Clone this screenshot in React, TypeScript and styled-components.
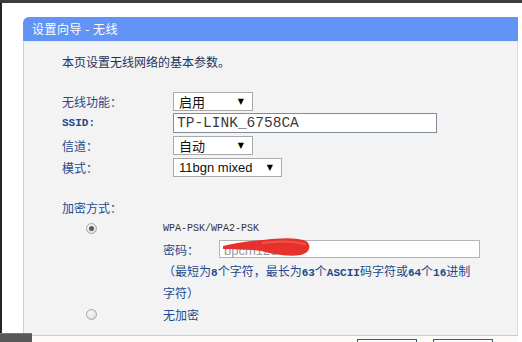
import { FC } from "react";
import styled, { createGlobalStyle } from "styled-components";

const GlobalStyle = createGlobalStyle`
  html, body {
    margin: 0;
    padding: 0;
    background: #fff;
  }
  body {
    font-family: "Noto Sans CJK SC", "Noto Sans", sans-serif;
  }
`;

const cjk = `"Noto Sans CJK SC", "Noto Sans", sans-serif`;
const mono = `"Liberation Mono", "DejaVu Sans Mono", monospace`;

const App: FC = () => {
  return (
    <>
      <GlobalStyle />
      <Screen>
        <TopEdge />
        <Desk>
          <Panel>
            <Header>设置向导 - 无线</Header>
            <Body>
              <Intro>本页设置无线网络的基本参数。</Intro>

              <FormGrid>
                <Label>无线功能：</Label>
                <Select $width={80}>
                  <span>启用</span>
                  <Arrow>▼</Arrow>
                </Select>

                <Label $mono>SSID:</Label>
                <TextInput $width={264}>TP-LINK_6758CA</TextInput>

                <Label>信道：</Label>
                <Select $width={80}>
                  <span>自动</span>
                  <Arrow>▼</Arrow>
                </Select>

                <Label>模式：</Label>
                <Select $width={109} $latin>
                  <span>11bgn mixed</span>
                  <Arrow>▼</Arrow>
                </Select>
              </FormGrid>

              <SectionLabel>加密方式：</SectionLabel>

              <EncGrid>
                <RadioCell $height={18}>
                  <Radio $checked />
                </RadioCell>
                <WpaText>WPA-PSK/WPA2-PSK</WpaText>

                <span />
                <PasswordRow>
                  <PasswordLabel>密码：</PasswordLabel>
                  <PasswordBox>
                    <Hidden>bpcm1234</Hidden>
                    <Scribble viewBox="0 0 92 22" width={92} height={22}>
                      <path
                        d="M2 9 C14 6,28 4,42 3 C58 1,76 0,85 4 C91 8,89 16,80 18 C66 20,52 17,40 14 C28 12,14 13,2 12 Z"
                        fill="#e6312c"
                      />
                      <path
                        d="M42 6 C56 4,72 4,84 7"
                        stroke="#f0544a"
                        strokeWidth={2}
                        fill="none"
                        strokeLinecap="round"
                      />
                    </Scribble>
                  </PasswordBox>
                </PasswordRow>

                <span />
                <Note>
                  （最短为<Ascii>8</Ascii>个字符，最长为<Ascii>63</Ascii>个
                  <Ascii>ASCII</Ascii>码字符或<Ascii>64</Ascii>个
                  <Ascii>16</Ascii>进制
                  <br />
                  字符）
                </Note>

                <RadioCell $height={24}>
                  <Radio />
                </RadioCell>
                <Option>无加密</Option>
              </EncGrid>
            </Body>
            <Footer>
              <Button>上一步</Button>
              <Button>下一步</Button>
            </Footer>
          </Panel>
        </Desk>
        <TaskCorner />
      </Screen>
    </>
  );
};

const Screen = styled.div`
  position: relative;
  width: 522px;
  height: 342px;
  overflow: hidden;
  background: #fff;
  display: flex;
  flex-direction: column;
`;

const TopEdge = styled.div`
  flex-shrink: 0;
  height: 3px;
  background: #3c3c3c;
`;

const Desk = styled.div`
  flex: 1;
  display: flex;
  align-items: flex-start;
  border-left: 2px solid #262626;
  padding: 14px 4px 0 21px;
`;

const Panel = styled.section`
  width: 495px;
  display: flex;
  flex-direction: column;
  flex-shrink: 0;
`;

const Header = styled.div`
  height: 24px;
  line-height: 24px;
  padding-left: 9px;
  background: #6194f5;
  border-top-left-radius: 6px;
  border-bottom: 1px solid #e2eaf6;
  color: #fff;
  font-family: ${cjk};
  font-size: 12px;
  letter-spacing: 0.5px;
`;

const Body = styled.div`
  background: #f3f3f3;
  border-left: 1px solid #f0c796;
  border-right: 1px solid #f4dab5;
  padding: 12px 0 9px 38px;
  color: #23407a;
  font-family: ${cjk};
  font-size: 12px;
`;

const Intro = styled.div`
  line-height: 16px;
  color: #1e335f;
`;

const FormGrid = styled.div`
  margin-top: 20px;
  display: grid;
  grid-template-columns: 111px auto;
  grid-auto-rows: 22px;
  align-items: center;
  justify-items: start;
`;

const Label = styled.span<{ $mono?: boolean }>`
  color: #1f4a8e;
  font-family: ${({ $mono }) => ($mono ? mono : cjk)};
  font-size: ${({ $mono }) => ($mono ? "11px" : "12px")};
  font-weight: ${({ $mono }) => ($mono ? "bold" : "normal")};
`;

const Select = styled.div<{ $width: number; $latin?: boolean }>`
  box-sizing: border-box;
  width: ${({ $width }) => $width}px;
  height: 19px;
  display: flex;
  align-items: center;
  justify-content: space-between;
  padding: 0 8px 0 5px;
  background: #fff;
  border: 1px solid #a9a9a9;
  color: #111;
  font-family: ${({ $latin }) =>
    $latin ? `"Liberation Sans", Arial, sans-serif` : cjk};
  font-size: 13px;
`;

const Arrow = styled.span`
  font-family: "DejaVu Sans", sans-serif;
  font-size: 8px;
  color: #000;
`;

const TextInput = styled.div<{ $width: number }>`
  box-sizing: border-box;
  width: ${({ $width }) => $width}px;
  height: 20px;
  line-height: 18px;
  padding-left: 3px;
  background: #fff;
  border: 1px solid #7d8b9b;
  color: #3a3a3a;
  font-family: ${mono};
  font-size: 14.5px;
`;

const SectionLabel = styled.div`
  margin-top: 22px;
  line-height: 16px;
  color: #1f4a8e;
`;

const EncGrid = styled.div`
  margin-top: 3px;
  display: grid;
  grid-template-columns: 101px 1fr;
  align-items: center;
`;

const RadioCell = styled.div<{ $height: number }>`
  height: ${({ $height }) => $height}px;
  display: flex;
  align-items: center;
  padding-left: 24px;
`;

const Radio = styled.span<{ $checked?: boolean }>`
  position: relative;
  box-sizing: border-box;
  width: 11px;
  height: 11px;
  border-radius: 50%;
  border: 1px solid #a8a8a8;
  background: radial-gradient(circle at 40% 35%, #fafafa 0%, #d6d6d6 100%);

  &::after {
    content: "";
    display: ${({ $checked }) => ($checked ? "block" : "none")};
    position: absolute;
    left: 2px;
    top: 2px;
    width: 5px;
    height: 5px;
    border-radius: 50%;
    background: #5a5a5a;
  }
`;

const WpaText = styled.span`
  color: #333;
  font-family: ${mono};
  font-size: 10px;
`;

const PasswordRow = styled.div`
  margin-top: 2px;
  height: 20px;
  display: flex;
  align-items: center;
`;

const PasswordLabel = styled.span`
  width: 56px;
  color: #1f4a8e;
`;

const PasswordBox = styled.div`
  position: relative;
  box-sizing: border-box;
  width: 261px;
  height: 18px;
  padding-left: 4px;
  line-height: 18px;
  background: #fff;
  border: 1px solid #b4b4b4;
`;

const Hidden = styled.span`
  color: #9a9a9a;
  font-family: "Liberation Sans", Arial, sans-serif;
  font-size: 13px;
`;

const Scribble = styled.svg`
  position: absolute;
  left: 1px;
  top: -4px;
`;

const Note = styled.div`
  margin-top: 2px;
  line-height: 19px;
  color: #23498c;
`;

const Ascii = styled.span`
  font-family: ${mono};
  font-size: 11px;
  font-weight: bold;
`;

const Option = styled.span`
  color: #1f4a8e;
`;

const Footer = styled.div`
  display: flex;
  justify-content: flex-end;
  gap: 16px;
  padding: 3px 25px 0 0;
  height: 30px;
  border-top: 1px solid #efc49a;
  background: #fbfaf6;
`;

const Button = styled.button`
  box-sizing: border-box;
  width: 60px;
  height: 22px;
  padding: 0;
  border: 1px solid #3c5685;
  background: linear-gradient(#fdfdfd, #e2e7ef);
  color: #111;
  font-family: ${cjk};
  font-size: 12px;
`;

const TaskCorner = styled.div`
  position: absolute;
  left: 0;
  bottom: 0;
  width: 32px;
  height: 8px;
  background: #575757;
  border-top: 1px solid #777;
`;

export default App;
